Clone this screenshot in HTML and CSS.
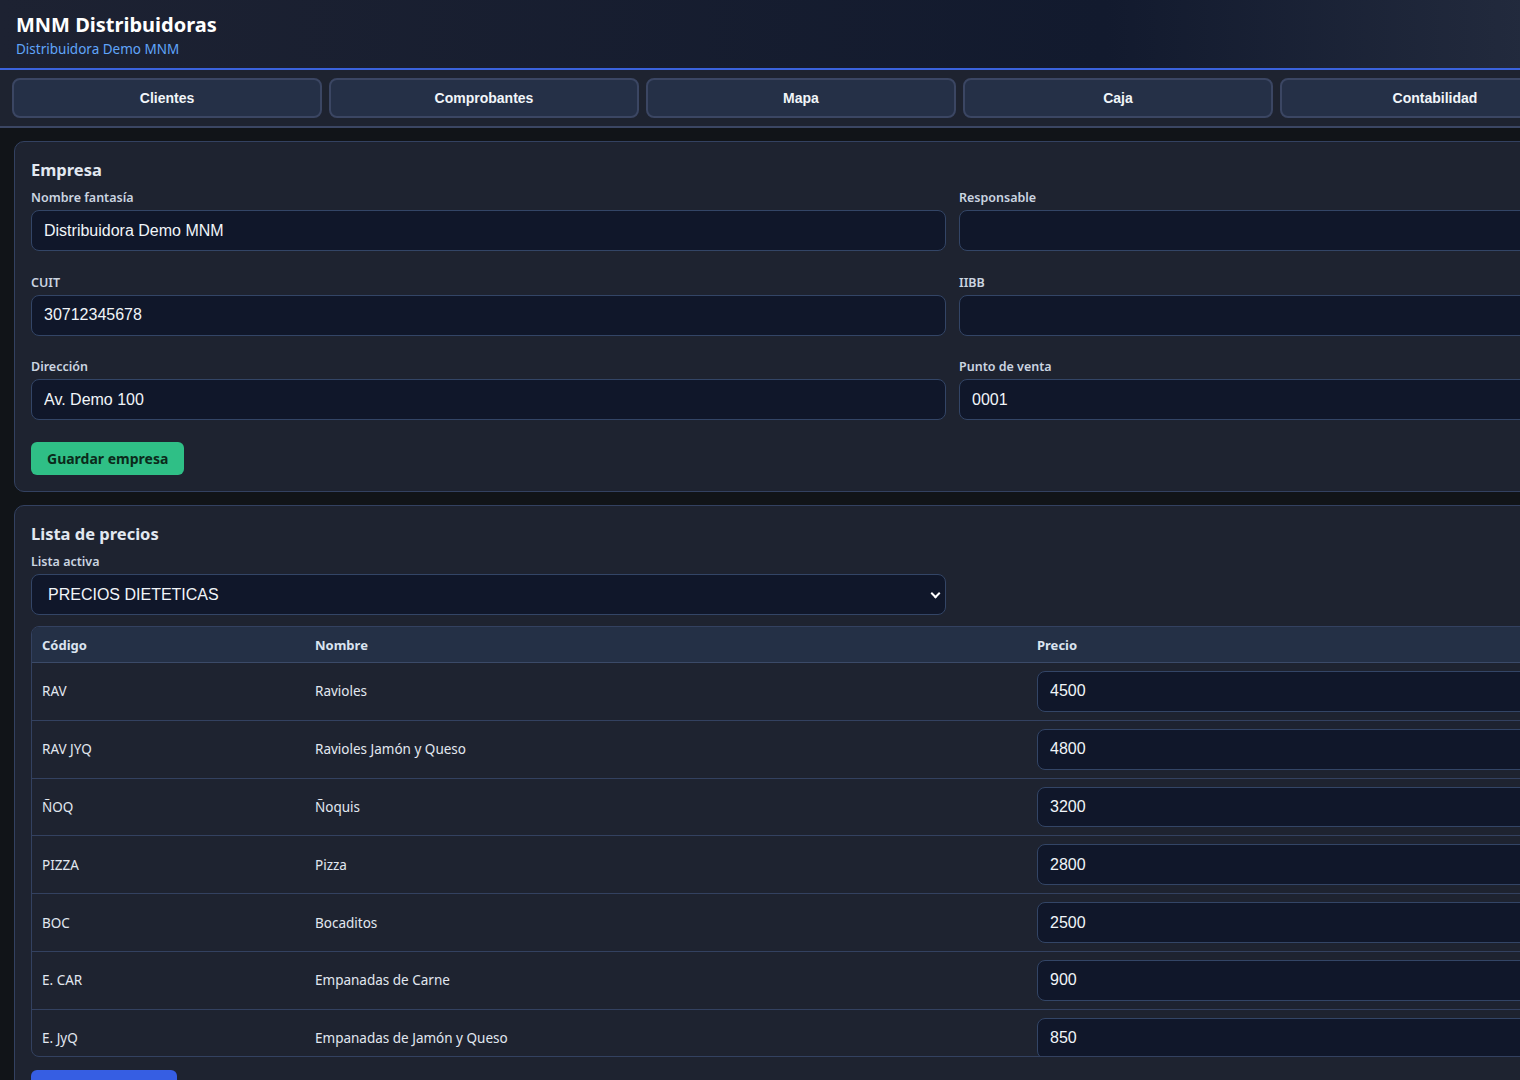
FILE: index.html
```html
<!DOCTYPE html>
<html lang="es">

<head>
    <meta charset="UTF-8">
    <meta name="viewport" content="width=device-width, initial-scale=1.0">
    <title>MNM Distribuidoras</title>
    <link rel="stylesheet" href="styles.css">
</head>

<body>
    <div class="page">
        <header class="topbar">
            <h1>MNM Distribuidoras</h1>
            <div class="subtitle">Distribuidora Demo MNM</div>
        </header>

        <nav class="tabs">
            <button class="tab">Clientes</button>
            <button class="tab">Comprobantes</button>
            <button class="tab">Mapa</button>
            <button class="tab">Caja</button>
            <button class="tab">Contabilidad</button>
            <button class="tab">Configuración</button>
        </nav>

        <main class="content">
            <!-- Datos de la empresa -->
            <section class="card">
                <h2>Empresa</h2>
                <div class="form-grid">
                    <div class="field">
                        <label for="nombre">Nombre fantasía</label>
                        <input type="text" id="nombre" value="Distribuidora Demo MNM">
                    </div>
                    <div class="field">
                        <label for="responsable">Responsable</label>
                        <input type="text" id="responsable" value="">
                    </div>
                    <div class="field">
                        <label for="cuit">CUIT</label>
                        <input type="text" id="cuit" value="30712345678">
                    </div>
                    <div class="field">
                        <label for="iibb">IIBB</label>
                        <input type="text" id="iibb" value="">
                    </div>
                    <div class="field">
                        <label for="direccion">Dirección</label>
                        <input type="text" id="direccion" value="Av. Demo 100">
                    </div>
                    <div class="field">
                        <label for="pv">Punto de venta</label>
                        <input type="text" id="pv" value="0001">
                    </div>
                </div>
                <button class="btn btn-green">Guardar empresa</button>
            </section>

            <!-- Lista de precios -->
            <section class="card">
                <h2>Lista de precios</h2>
                <div class="form-grid">
                    <div class="field">
                        <label for="lista">Lista activa</label>
                        <div class="select-wrap">
                            <select id="lista">
                                <option>PRECIOS DIETETICAS</option>
                                <option>PRECIOS MAYORISTA</option>
                                <option>PRECIOS MINORISTA</option>
                            </select>
                        </div>
                    </div>
                </div>

                <div class="table-wrap">
                    <table class="prices">
                        <thead>
                            <tr>
                                <th class="col-code">Código</th>
                                <th class="col-name">Nombre</th>
                                <th>Precio</th>
                            </tr>
                        </thead>
                        <tbody id="priceRows"></tbody>
                    </table>
                </div>

                <button class="btn btn-blue">Guardar precios</button>
            </section>
        </main>
    </div>

    <script>
        const productos = [
            { codigo: 'RAV', nombre: 'Ravioles', precio: 4500 },
            { codigo: 'RAV JYQ', nombre: 'Ravioles Jamón y Queso', precio: 4800 },
            { codigo: 'ÑOQ', nombre: 'Ñoquis', precio: 3200 },
            { codigo: 'PIZZA', nombre: 'Pizza', precio: 2800 },
            { codigo: 'BOC', nombre: 'Bocaditos', precio: 2500 },
            { codigo: 'E. CAR', nombre: 'Empanadas de Carne', precio: 900 },
            { codigo: 'E. JyQ', nombre: 'Empanadas de Jamón y Queso', precio: 850 },
            { codigo: 'TAPA', nombre: 'Tapas de Empanada', precio: 700 }
        ];

        const tbody = document.getElementById('priceRows');
        tbody.innerHTML = productos.map(p => `
            <tr>
                <td>${p.codigo}</td>
                <td>${p.nombre}</td>
                <td><input type="number" value="${p.precio}"></td>
            </tr>`).join('');
    </script>
</body>

</html>
```

FILE: styles.css
```css
html {
    overflow-x: hidden;
}

body {
    margin: 0;
    background-color: #111418;
    color: #e2e8f0;
    font-family: "Noto Sans", "Open Sans", sans-serif;
}

.page {
    width: 1905px;
}

/* Top header */
.topbar {
    padding: 12px 16px 10px;
    background: linear-gradient(90deg, #1d2232 0%, #121a2e 58%, #222a3d 80%, #27304a 100%);
    border-bottom: 2px solid #3b63dd;
}

.topbar h1 {
    margin: 0;
    font-size: 20px;
    line-height: 26px;
    font-weight: 700;
    color: #ffffff;
}

.subtitle {
    margin-top: 2px;
    font-size: 13.5px;
    line-height: 18px;
    color: #60a5fa;
}

/* Tabs */
.tabs {
    display: grid;
    grid-template-columns: repeat(6, 310px);
    gap: 7px;
    padding: 8px 12px;
    background-color: #1e2330;
    border-bottom: 2px solid #3b4663;
}

.tab {
    height: 40px;
    font-family: "Liberation Sans", Arial, sans-serif;
    font-size: 14px;
    font-weight: 700;
    color: #f1f5f9;
    background-color: #253047;
    border: 2px solid #3b4663;
    border-radius: 8px;
    cursor: pointer;
}

/* Cards */
.content {
    padding: 13px 14px;
}

.card {
    margin-bottom: 13px;
    padding: 16px;
    background-color: #1e2330;
    border: 1px solid #334160;
    border-radius: 10px;
}

.card h2 {
    margin: 0 0 9px;
    font-size: 16.5px;
    line-height: 23px;
    font-weight: 700;
    color: #e2e8f0;
}

.form-grid {
    display: grid;
    grid-template-columns: 915px 915px;
    column-gap: 13px;
    row-gap: 23.5px;
}

.field label {
    display: block;
    margin-bottom: 4px;
    font-size: 12.5px;
    line-height: 16px;
    font-weight: 600;
    color: #cbd5e1;
}

input[type="text"],
input[type="number"],
select {
    display: block;
    width: 100%;
    height: 41px;
    padding: 0 12px;
    box-sizing: border-box;
    font-family: "Liberation Sans", Arial, sans-serif;
    font-size: 16px;
    color: #f1f5f9;
    background-color: #10172a;
    border: 1px solid #334566;
    border-radius: 8px;
    outline: none;
}

input[type="number"] {
    -moz-appearance: textfield;
}

input[type="number"]::-webkit-inner-spin-button,
input[type="number"]::-webkit-outer-spin-button {
    -webkit-appearance: none;
    margin: 0;
}

.select-wrap {
    position: relative;
}

select {
    appearance: none;
    padding-left: 16px;
}

.select-wrap::after {
    content: "";
    position: absolute;
    right: 7px;
    top: 16px;
    width: 5px;
    height: 5px;
    border-right: 2px solid #ffffff;
    border-bottom: 2px solid #ffffff;
    transform: rotate(45deg);
    pointer-events: none;
}

/* Buttons */
.btn {
    height: 33px;
    margin-top: 22px;
    padding: 0 16px;
    font-family: "Noto Sans", "Open Sans", sans-serif;
    font-size: 14px;
    font-weight: 700;
    border: none;
    border-radius: 6px;
    cursor: pointer;
}

.btn-green {
    background-color: #2fbf86;
    color: #0b2a1b;
}

.btn-blue {
    margin-top: 13px;
    width: 146px;
    background-color: #365ee3;
    color: #ffffff;
}

/* Price table */
.table-wrap {
    margin-top: 11px;
    max-height: 429px;
    overflow: hidden auto;
    border: 1px solid #334160;
    border-radius: 8px;
}

.prices {
    width: 100%;
    border-collapse: collapse;
    font-size: 13.5px;
}

.prices th {
    height: 35px;
    padding: 0 10px;
    text-align: left;
    font-size: 13px;
    font-weight: 700;
    color: #dbe4f0;
    background-color: #243046;
    border-bottom: 1px solid #3b4a68;
}

.col-code {
    width: 253px;
}

.col-name {
    width: 702px;
}

.prices td {
    padding: 8px 10px;
    color: #e2e8f0;
    border-bottom: 1px solid #334160;
}

.prices td input[type="number"] {
    height: 40.8px;
}
```
